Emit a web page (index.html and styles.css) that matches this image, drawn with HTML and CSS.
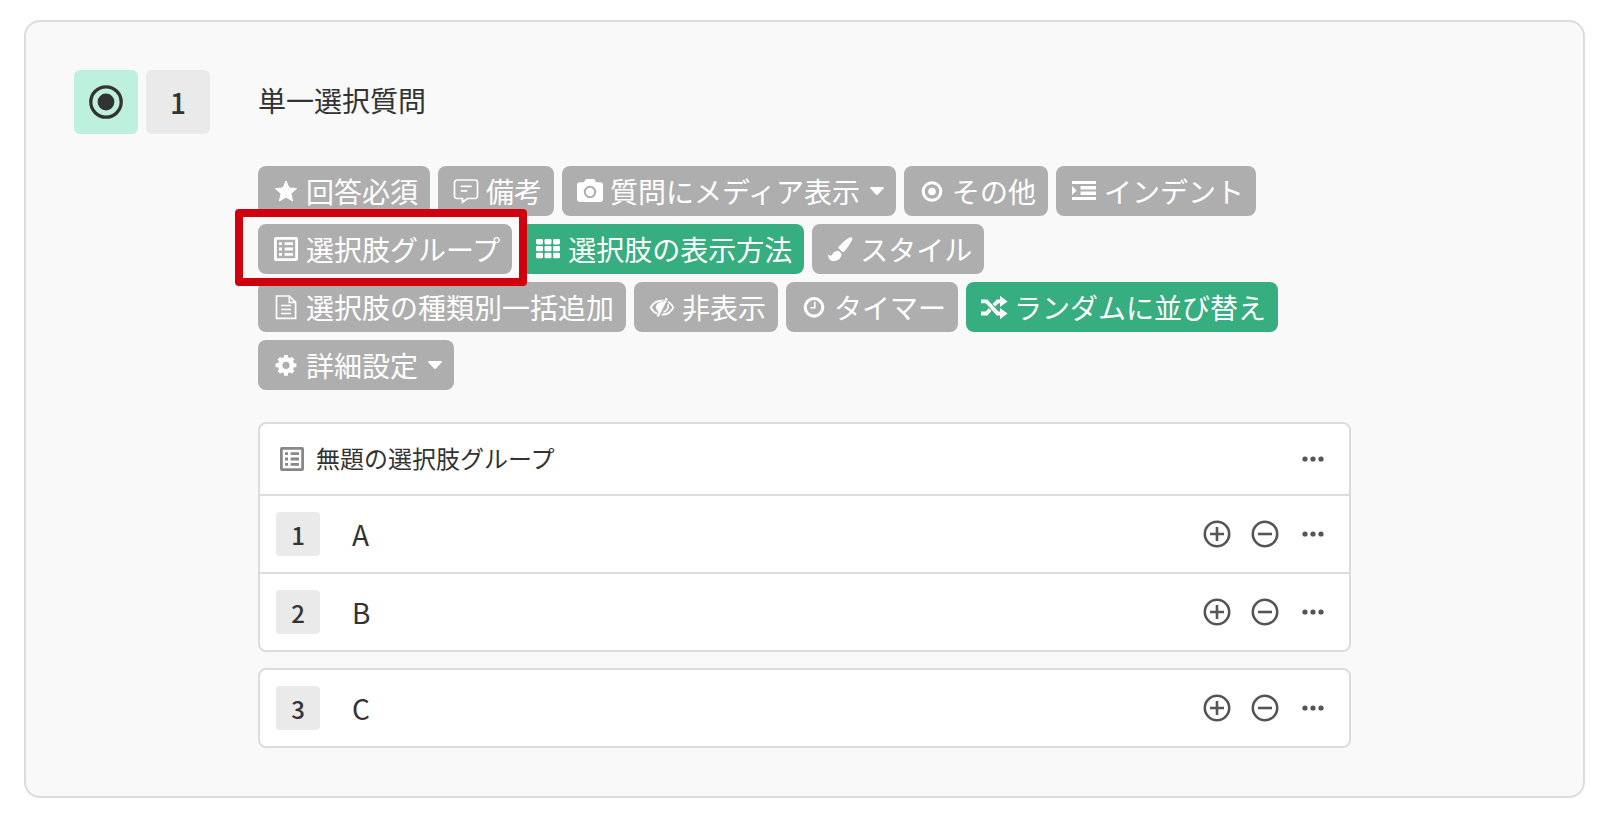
FILE: index.html
```
<!DOCTYPE html>
<html lang="ja">
<head>
  <meta charset="UTF-8">
  <meta name="viewport" content="width=device-width, initial-scale=1.0">
  <title>単一選択質問</title>
  <link rel="stylesheet" href="styles.css">
</head>
<body>
  <!-- Shared icons -->
  <svg class="sprite" aria-hidden="true">
    <symbol id="icon-list" viewBox="0 0 24 24">
      <rect x="1.400" y="1.400" width="21.200" height="21.200" rx="0.500" fill="none" stroke="currentColor" stroke-width="2.800"/>
      <path d="M5 6.700h3M10.600 6.700H19M5 12h3M10.600 12H19M5 17.300h3M10.600 17.300H19" stroke="currentColor" stroke-width="2.800"/>
    </symbol>
    <symbol id="icon-plus" viewBox="0 0 32 32">
      <circle cx="16" cy="16" r="12.200" fill="none" stroke="currentColor" stroke-width="2.600"/>
      <path d="M9 16h14M16 9v14" stroke="currentColor" stroke-width="2.600"/>
    </symbol>
    <symbol id="icon-minus" viewBox="0 0 32 32">
      <circle cx="16" cy="16" r="12.200" fill="none" stroke="currentColor" stroke-width="2.600"/>
      <path d="M9 16h14" stroke="currentColor" stroke-width="2.600"/>
    </symbol>
    <symbol id="icon-more" viewBox="0 0 32 32">
      <circle cx="8" cy="16" r="2.600" fill="currentColor"/>
      <circle cx="16" cy="16" r="2.600" fill="currentColor"/>
      <circle cx="24" cy="16" r="2.600" fill="currentColor"/>
    </symbol>
    <symbol id="icon-caret" viewBox="0 0 14 8">
      <path d="M1 0h12q1.400.4.600 1.500L8 7.500q-1 .9-2 0L.4 1.500Q-.4.4 1 0z" fill="currentColor"/>
    </symbol>
  </svg>

  <section class="question-card">
    <!-- Question type and number -->
    <div class="badges">
      <span class="badge badge-type">
        <svg viewBox="0 0 34 34" width="34" height="34">
          <circle cx="17" cy="17" r="15.200" fill="none" stroke="currentColor" stroke-width="3.300"/>
          <circle cx="17" cy="17" r="8.400" fill="currentColor"/>
        </svg>
      </span>
      <span class="badge">1</span>
    </div>

    <div class="question">
      <h2>単一選択質問</h2>

      <!-- Toolbar -->
      <div class="toolbar">
        <button type="button" class="tool">
          <svg class="icon" viewBox="0 0 28 28"><path d="M14 4l3 6.900 7.600.7-5.700 5 1.700 7.400-6.600-3.900L7.400 24l1.700-7.400-5.700-5 7.600-.7z" fill="currentColor" stroke="currentColor" stroke-linejoin="round"/></svg>
          <span>回答必須</span>
        </button>
        <button type="button" class="tool">
          <svg class="icon" viewBox="0 0 28 28"><path d="M5 3h18a2.500 2.500 0 0 1 2.500 2.500V19a2.500 2.500 0 0 1-2.500 2.500h-7.500L10.500 25.300V21.500H5A2.500 2.500 0 0 1 2.500 19V5.500A2.500 2.500 0 0 1 5 3zM8.700 9.300h11M8.700 13.900h6.600" fill="none" stroke="currentColor" stroke-width="1.700"/></svg>
          <span>備考</span>
        </button>
        <button type="button" class="tool">
          <svg class="icon" viewBox="0 0 28 28">
            <path d="M4 5.300h4l1-2q.6-1.300 2-1.300h6q1.400 0 2 1.300l1 2h4q3 0 3 3V22q0 3-3 3H4q-3 0-3-3V8.300q0-3 3-3z" fill="currentColor"/>
            <circle class="lens" cx="14" cy="15" r="5.200"/>
          </svg>
          <span>質問にメディア表示</span>
          <svg class="caret"><use href="#icon-caret"/></svg>
        </button>
        <button type="button" class="tool">
          <svg class="icon" viewBox="0 0 28 28"><circle cx="14" cy="14.500" r="8.800" fill="none" stroke="currentColor" stroke-width="3.100"/><circle cx="14" cy="14.500" r="3.800" fill="currentColor"/></svg>
          <span>その他</span>
        </button>
        <button type="button" class="tool">
          <svg class="icon" viewBox="0 0 28 28"><path d="M2 4h24v3H2zM10.500 9H26v3.500H10.500zM10.500 14.500H26V18H10.500zM2 20h24v3H2zM2 9l4.600 4.500L2 18z" fill="currentColor"/></svg>
          <span>インデント</span>
        </button>
        <button type="button" class="tool highlighted">
          <svg class="icon icon-small"><use href="#icon-list"/></svg>
          <span>選択肢グループ</span>
        </button>
        <button type="button" class="tool active">
          <svg class="icon" viewBox="0 0 28 28">
            <g fill="currentColor">
              <rect x="2" y="4" width="7" height="5.400" rx="1.300"/><rect x="10.500" y="4" width="7" height="5.400" rx="1.300"/><rect x="19" y="4" width="7" height="5.400" rx="1.300"/>
              <rect x="2" y="10.900" width="7" height="5.400" rx="1.300"/><rect x="10.500" y="10.900" width="7" height="5.400" rx="1.300"/><rect x="19" y="10.900" width="7" height="5.400" rx="1.300"/>
              <rect x="2" y="17.800" width="7" height="5.400" rx="1.300"/><rect x="10.500" y="17.800" width="7" height="5.400" rx="1.300"/><rect x="19" y="17.800" width="7" height="5.400" rx="1.300"/>
            </g>
          </svg>
          <span>選択肢の表示方法</span>
        </button>
        <button type="button" class="tool">
          <svg class="icon" viewBox="0 0 28 28"><path d="M25.800 2.600q1.100 1.100.2 2.700Q23 11.500 18.200 16.500q-1 1-2 .3l-3.500-3.300q-.9-.9.100-2Q17.500 5.600 23.100 2.700q1.600-.9 2.700-.1zM10.800 16.200q1-1 2.300.1l1.500 1.500q1.300 1.300.8 2.800-1.500 4.600-6.500 5.500-4.600.7-6.400-3.500-.7-2-.1-3.400 1 1.600 2.300 1.600 1-.1 1.700-1.500 1.300-3 4.400-3.100z" fill="currentColor"/></svg>
          <span>スタイル</span>
        </button>
        <button type="button" class="tool">
          <svg class="icon" viewBox="0 0 28 28"><path d="M4.500 3h12.800l6.300 6.300V25.300H4.500zM17.300 3v6.300h6.300M9 12.500h10M9 16.500h10M9 20.500h10" fill="none" stroke="currentColor" stroke-width="1.700"/></svg>
          <span>選択肢の種類別一括追加</span>
        </button>
        <button type="button" class="tool">
          <svg class="icon" viewBox="0 0 28 28">
            <path d="M15.500 7.600Q6.500 6.800 2.700 14.500q2.300 4.500 6.600 6.300M19.800 8.700q3.600 1.900 5.500 5.800-3.800 7.500-11.800 7.200M20 11.300q1.400 5.200-4.500 8" fill="none" stroke="currentColor" stroke-width="1.700"/>
            <path d="M18.800 5.300l-9.200 18.200" stroke="currentColor" stroke-width="2.200"/>
            <path d="M16 8.500Q8.300 8.700 7.900 14q.1 3.300 2.900 5.400z" fill="currentColor"/>
          </svg>
          <span>非表示</span>
        </button>
        <button type="button" class="tool">
          <svg class="icon" viewBox="0 0 28 28"><circle cx="14" cy="14.300" r="8.800" fill="none" stroke="currentColor" stroke-width="3.100"/><path d="M14.800 8.800v6h-4.500" fill="none" stroke="currentColor" stroke-width="1.600"/></svg>
          <span>タイマー</span>
        </button>
        <button type="button" class="tool active">
          <svg class="icon" viewBox="0 0 28 28"><path d="M1 8.300h5.500L17.600 20.500H21M1 20.500h5.500l3.600-4M14 12.300l3.600-4H21" fill="none" stroke="currentColor" stroke-width="3.800"/><path d="M20 2.800l7.500 5.600L20 14zM20 15l7.500 5.600L20 26.200z" fill="currentColor"/></svg>
          <span>ランダムに並び替え</span>
        </button>
        <button type="button" class="tool">
          <svg class="icon" viewBox="0 0 28 28">
            <circle cx="14" cy="14.300" r="5.900" fill="none" stroke="currentColor" stroke-width="4.600"/>
            <path d="M14 3.900v4M14 20.700v4M3.600 14.300h4M20.400 14.300h4M6.900 7.200l3 3M18.100 18.400l3 3M21.100 7.200l-3 3M9.900 18.400l-3 3" stroke="currentColor" stroke-width="4"/>
          </svg>
          <span>詳細設定</span>
          <svg class="caret"><use href="#icon-caret"/></svg>
        </button>
      </div>

      <!-- Grouped choices -->
      <div class="choice-box">
        <div class="choice-header">
          <svg class="group-icon"><use href="#icon-list"/></svg>
          <h3>無題の選択肢グループ</h3>
          <div class="actions">
            <button type="button" aria-label="メニュー"><svg><use href="#icon-more"/></svg></button>
          </div>
        </div>
        <div class="choice">
          <span class="number">1</span>
          <span class="label">A</span>
          <div class="actions">
            <button type="button" aria-label="追加"><svg><use href="#icon-plus"/></svg></button>
            <button type="button" aria-label="削除"><svg><use href="#icon-minus"/></svg></button>
            <button type="button" aria-label="メニュー"><svg><use href="#icon-more"/></svg></button>
          </div>
        </div>
        <div class="choice">
          <span class="number">2</span>
          <span class="label">B</span>
          <div class="actions">
            <button type="button" aria-label="追加"><svg><use href="#icon-plus"/></svg></button>
            <button type="button" aria-label="削除"><svg><use href="#icon-minus"/></svg></button>
            <button type="button" aria-label="メニュー"><svg><use href="#icon-more"/></svg></button>
          </div>
        </div>
      </div>

      <!-- Choice outside the group -->
      <div class="choice-box">
        <div class="choice">
          <span class="number">3</span>
          <span class="label">C</span>
          <div class="actions">
            <button type="button" aria-label="追加"><svg><use href="#icon-plus"/></svg></button>
            <button type="button" aria-label="削除"><svg><use href="#icon-minus"/></svg></button>
            <button type="button" aria-label="メニュー"><svg><use href="#icon-more"/></svg></button>
          </div>
        </div>
      </div>
    </div>
  </section>
</body>
</html>
```
FILE: styles.css
```
/* styles.css */

:root {
  --card-color: #f9f9f9;
  --border-color: #dcdcdc;
  --text-color: #333;
  --icon-color: #555;
  --tool-color: #aeaeae;
  --active-color: #36ae80;
  --highlight-color: #d0000e;
}

* {
  box-sizing: border-box;
}

body {
  font-family: 'Noto Sans CJK JP', 'Noto Sans', sans-serif;
  margin: 0;
  background-color: #fff;
  color: var(--text-color);
}

button {
  font-family: inherit;
  border: none;
  padding: 0;
  cursor: pointer;
}

svg {
  display: block;
  flex-shrink: 0;
}

.sprite {
  display: none;
}

/* Card */
.question-card {
  display: grid;
  grid-template-columns: 136px minmax(0, 1fr) 136px;
  gap: 48px;
  margin: 20px 33px 28px 24px;
  padding: 48px;
  background-color: var(--card-color);
  border: 2px solid var(--border-color);
  border-radius: 16px;
}

.badges {
  display: flex;
  align-items: flex-start;
  gap: 8px;
}

.badge {
  display: flex;
  align-items: center;
  justify-content: center;
  width: 64px;
  height: 64px;
  border-radius: 6px;
  background-color: #eaeaea;
  font-size: 28px;
  font-weight: 500;
}

.badge-type {
  background-color: #bef0de;
}

.question h2 {
  margin: 0 0 36px;
  font-size: 28px;
  font-weight: 400;
  line-height: 60px;
}

/* Toolbar */
.toolbar {
  display: flex;
  flex-wrap: wrap;
  gap: 8px;
  margin-bottom: 32px;
}

.tool {
  position: relative;
  display: flex;
  align-items: center;
  height: 50px;
  padding: 0 12px;
  border-radius: 8px;
  background-color: var(--tool-color);
  color: #fff;
  font-size: 28px;
  white-space: nowrap;
}

.tool.active {
  background-color: var(--active-color);
}

.icon {
  width: 28px;
  height: 28px;
  margin: 0 6px 0 2px;
}

.icon-small {
  width: 24px;
  height: 24px;
  margin: 0 8px 0 4px;
}

.lens {
  fill: none;
  stroke: var(--tool-color);
  stroke-width: 2;
}

.caret {
  width: 14px;
  height: 8px;
  margin-left: 10px;
}

.highlighted::after {
  content: "";
  position: absolute;
  top: -15px;
  right: -15px;
  bottom: -12px;
  left: -23px;
  border: 8px solid var(--highlight-color);
  border-radius: 4px;
  z-index: 1;
  pointer-events: none;
}

/* Choices */
.choice-box {
  background-color: #fff;
  border: 2px solid var(--border-color);
  border-radius: 8px;
}

.choice-box + .choice-box {
  margin-top: 16px;
}

.choice-header,
.choice {
  display: flex;
  align-items: center;
  padding: 0 20px 0 16px;
}

.choice-header {
  height: 70px;
  padding-left: 20px;
}

.choice {
  height: 76px;
}

.choice-header + .choice,
.choice + .choice {
  height: 78px;
  border-top: 2px solid var(--border-color);
}

.group-icon {
  width: 24px;
  height: 24px;
  color: #888;
}

.choice-header h3 {
  margin: 0 0 0 12px;
  padding-bottom: 4px;
  font-size: 24px;
  font-weight: 400;
}

.number {
  display: flex;
  align-items: center;
  justify-content: center;
  width: 44px;
  height: 44px;
  border-radius: 4px;
  background-color: #eaeaea;
  font-size: 24px;
  font-weight: 500;
}

.label {
  margin-left: 32px;
  font-size: 28px;
}

.actions {
  display: flex;
  gap: 16px;
  margin-left: auto;
}

.actions button {
  width: 32px;
  height: 32px;
  background: none;
  color: var(--icon-color);
}

.actions svg {
  width: 32px;
  height: 32px;
}
```
